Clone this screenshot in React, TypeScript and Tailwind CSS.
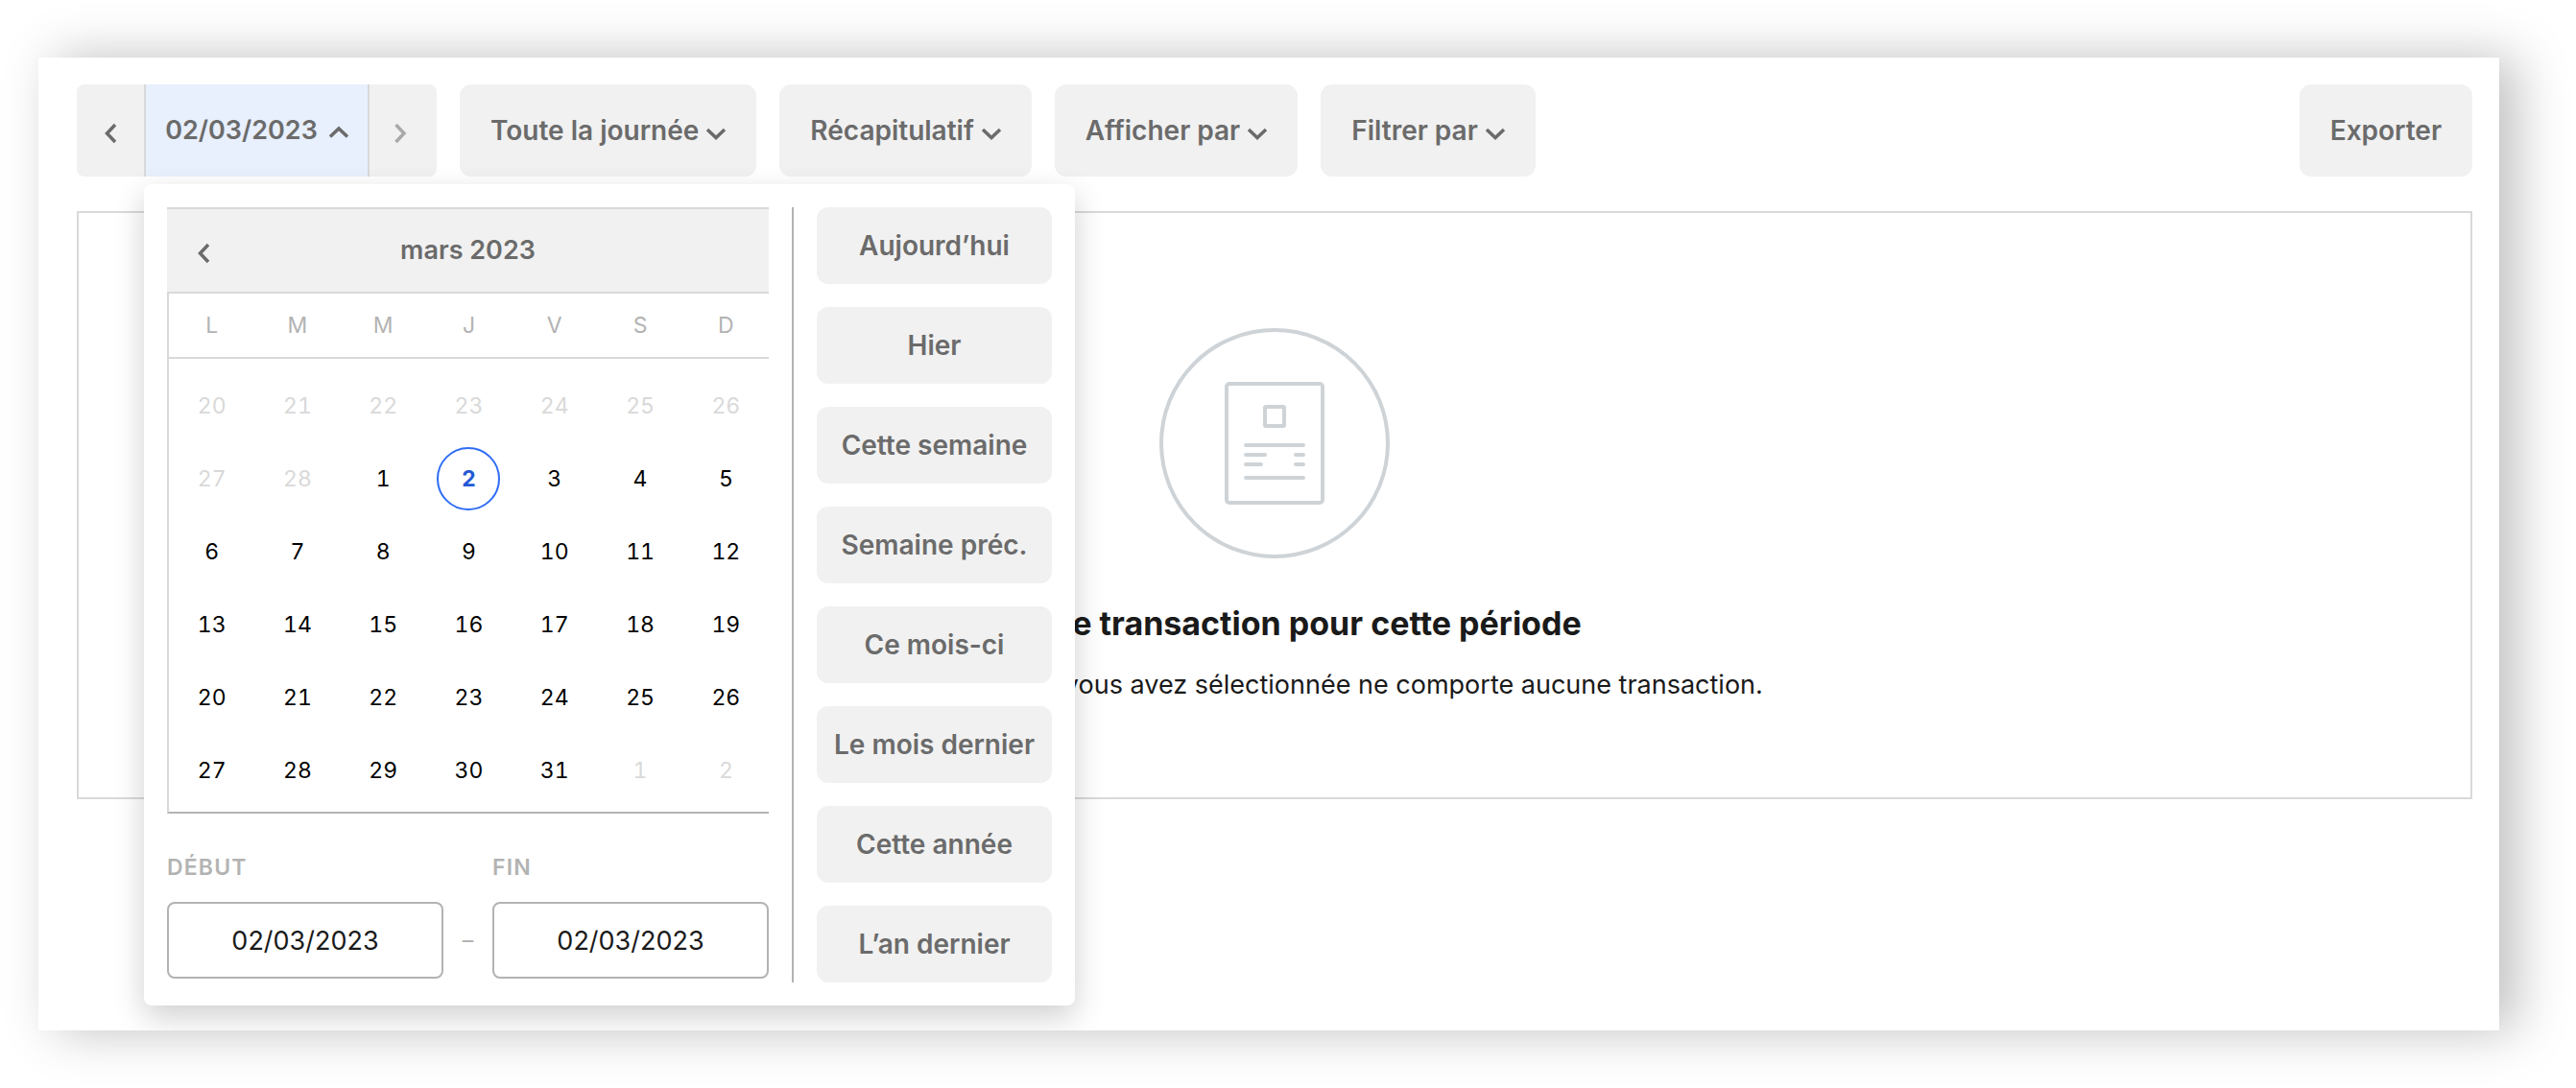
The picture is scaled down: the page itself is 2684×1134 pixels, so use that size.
import { useState } from "react";

const FILTERS = ["Toute la journée", "Récapitulatif", "Afficher par", "Filtrer par"];

const PRESETS = [
  "Aujourd’hui",
  "Hier",
  "Cette semaine",
  "Semaine préc.",
  "Ce mois-ci",
  "Le mois dernier",
  "Cette année",
  "L’an dernier",
];

const WEEKDAYS = ["L", "M", "M", "J", "V", "S", "D"];

type Day = { day: number; outside: boolean };

// six weeks starting on Monday 20 February 2023
const WEEKS: Day[][] = Array.from({ length: 6 }, (_, week) =>
  Array.from({ length: 7 }, (_, weekday) => {
    const date = new Date(2023, 1, 20 + week * 7 + weekday);
    return { day: date.getDate(), outside: date.getMonth() !== 2 };
  })
);

type Direction = "up" | "down" | "left" | "right";

const CHEVRONS: Record<Direction, string> = {
  up: "M3 18.5 12 10l9 8.5",
  down: "M3 11l9 8.5 9-8.5",
  left: "M17 6 8.5 15l8.5 9",
  right: "M4.5 6l8.5 9-8.5 9",
};

function Chevron({ direction }: { direction: Direction }) {
  return (
    <svg
      viewBox="2 0 20 24"
      className="h-6 w-5 shrink-0 overflow-visible"
      fill="none"
      stroke="currentColor"
      strokeWidth="3.5"
      aria-hidden="true"
    >
      <path d={CHEVRONS[direction]} />
    </svg>
  );
}

function EmptyIllustration() {
  return (
    <svg
      viewBox="0 0 240 240"
      className="size-60"
      fill="none"
      stroke="#ced3d7"
      strokeWidth="4"
      aria-hidden="true"
    >
      <circle cx="120" cy="120" r="118" />
      <rect x="70" y="58" width="100" height="124" rx="3" />
      <rect x="110" y="82" width="20" height="20" rx="1" />
      <path
        strokeLinecap="round"
        d="M90 122h60M90 132h20M142 132h8M90 142h16M142 142h8M90 156h60"
      />
    </svg>
  );
}

function Calendar({
  selected,
  onSelect,
}: {
  selected: number;
  onSelect: (day: number) => void;
}) {
  return (
    <div>
      <div className="grid h-[90px] grid-cols-[44px_1fr_44px] items-center border-y-2 border-[#d9d9d9] bg-[#f1f1f1] px-4 text-[27px] font-semibold text-[#6b6b6b]">
        <button
          type="button"
          aria-label="Mois précédent"
          className="flex h-11 items-center justify-center"
        >
          <Chevron direction="left" />
        </button>
        <p className="text-center">mars 2023</p>
      </div>
      <div className="border-b-2 border-l-2 border-b-[#b3b3b3] border-l-[#d9d9d9] pb-[5px]">
        <table className="w-full table-fixed border-collapse text-[23px] font-normal tabular-nums">
          <thead>
            <tr className="h-[67px] border-b-2 border-[#d9d9d9] text-[#b3b3b3]">
              {WEEKDAYS.map((name, i) => (
                <th key={i} scope="col" className="p-0 font-normal">
                  {name}
                </th>
              ))}
            </tr>
          </thead>
          <tbody className="before:block before:h-[11px]">
            {WEEKS.map((week, i) => (
              <tr key={i} className="h-[76px]">
                {week.map(({ day, outside }) => (
                  <td key={day} className="p-0">
                    <button
                      type="button"
                      disabled={outside}
                      onClick={() => onSelect(day)}
                      className={`mx-auto flex size-[66px] items-center justify-center rounded-full ${
                        outside
                          ? "text-[#d9d9d9]"
                          : day === selected
                            ? "border-2 border-[#2f6df6] font-bold text-[#2459d6]"
                            : "text-black"
                      }`}
                    >
                      {day}
                    </button>
                  </td>
                ))}
              </tr>
            ))}
          </tbody>
        </table>
      </div>
    </div>
  );
}

function DateField({
  id,
  label,
  value,
  onChange,
}: {
  id: string;
  label: string;
  value: string;
  onChange: (value: string) => void;
}) {
  return (
    <div className="min-w-0 flex-1">
      <label
        htmlFor={id}
        className="block text-[23px] leading-7 font-semibold tracking-wider text-[#b3b3b3]"
      >
        {label}
      </label>
      <input
        id={id}
        type="text"
        value={value}
        onChange={(e) => onChange(e.target.value)}
        className="mt-[22px] h-20 w-full rounded-lg border-2 border-[#b3b3b3] text-center text-[27px] font-normal text-[#1a1a1a]"
      />
    </div>
  );
}

function DatePopup() {
  const [selected, setSelected] = useState(2);
  const [start, setStart] = useState("02/03/2023");
  const [end, setEnd] = useState("02/03/2023");

  return (
    <div className="absolute top-full left-[70px] z-10 mt-2 flex w-[970px] rounded-lg bg-white p-6 shadow-[0_12px_32px_rgba(0,0,0,0.19)]">
      <div className="flex-1 pr-6">
        <Calendar selected={selected} onSelect={setSelected} />
        <div className="mt-[42px] flex items-end">
          <DateField id="start" label="DÉBUT" value={start} onChange={setStart} />
          <span className="flex h-20 w-[51px] items-center justify-center text-[23px] font-normal text-[#b3b3b3]">
            –
          </span>
          <DateField id="end" label="FIN" value={end} onChange={setEnd} />
        </div>
      </div>
      <div className="flex w-[271px] flex-col gap-6 border-l-2 border-[#b3b3b3] pl-6">
        {PRESETS.map((preset) => (
          <button
            key={preset}
            type="button"
            className="h-20 rounded-xl bg-[#f1f1f1] text-[28px] font-semibold text-[#6b6b6b]"
          >
            {preset}
          </button>
        ))}
      </div>
    </div>
  );
}

function DateNavigator() {
  const [open, setOpen] = useState(true);

  return (
    <div className="relative">
      <div className="flex h-24 overflow-hidden rounded-lg bg-[#f1f1f1]">
        <button
          type="button"
          aria-label="Jour précédent"
          className="flex w-[70px] items-center justify-center"
        >
          <Chevron direction="left" />
        </button>
        <button
          type="button"
          aria-expanded={open}
          onClick={() => setOpen(!open)}
          className="flex w-[235px] items-center justify-center gap-3 border-x-2 border-[#d9d9d9] bg-[#e8effd] text-[27px]"
        >
          02/03/2023
          <Chevron direction="up" />
        </button>
        <button
          type="button"
          aria-label="Jour suivant"
          className="flex w-[70px] items-center justify-center text-[#a9a9a9]"
        >
          <Chevron direction="right" />
        </button>
      </div>
      {open && <DatePopup />}
    </div>
  );
}

export default function App() {
  return (
    <div className="bg-white pt-[60px] pr-20 pb-[60px] pl-10 font-[Inter,'Liberation_Sans',sans-serif]">
      <main className="min-h-[1014px] overflow-hidden bg-white pt-7 pr-7 pl-10 shadow-[18px_0_50px_rgba(0,0,0,0.25)]">
        <div className="flex gap-6 text-[28px] font-semibold text-[#6b6b6b]">
          <DateNavigator />
          {FILTERS.map((filter) => (
            <button
              key={filter}
              type="button"
              className="flex h-24 items-center gap-2 rounded-xl bg-[#f1f1f1] px-8"
            >
              {filter}
              <Chevron direction="down" />
            </button>
          ))}
          <button type="button" className="ml-auto h-24 rounded-xl bg-[#f1f1f1] px-8">
            Exporter
          </button>
        </div>

        <section className="mt-9 flex flex-col items-center border-2 border-[#d9d9d9] pt-[120px] pb-[97px] text-[#1a1a1a]">
          <EmptyIllustration />
          <h1 className="mt-11 text-[34px] leading-[48px] font-bold">
            Aucune transaction pour cette période
          </h1>
          <p className="mt-5 text-[27px] leading-10">
            La plage de dates que vous avez sélectionnée ne comporte aucune transaction.
          </p>
        </section>
      </main>
    </div>
  );
}
